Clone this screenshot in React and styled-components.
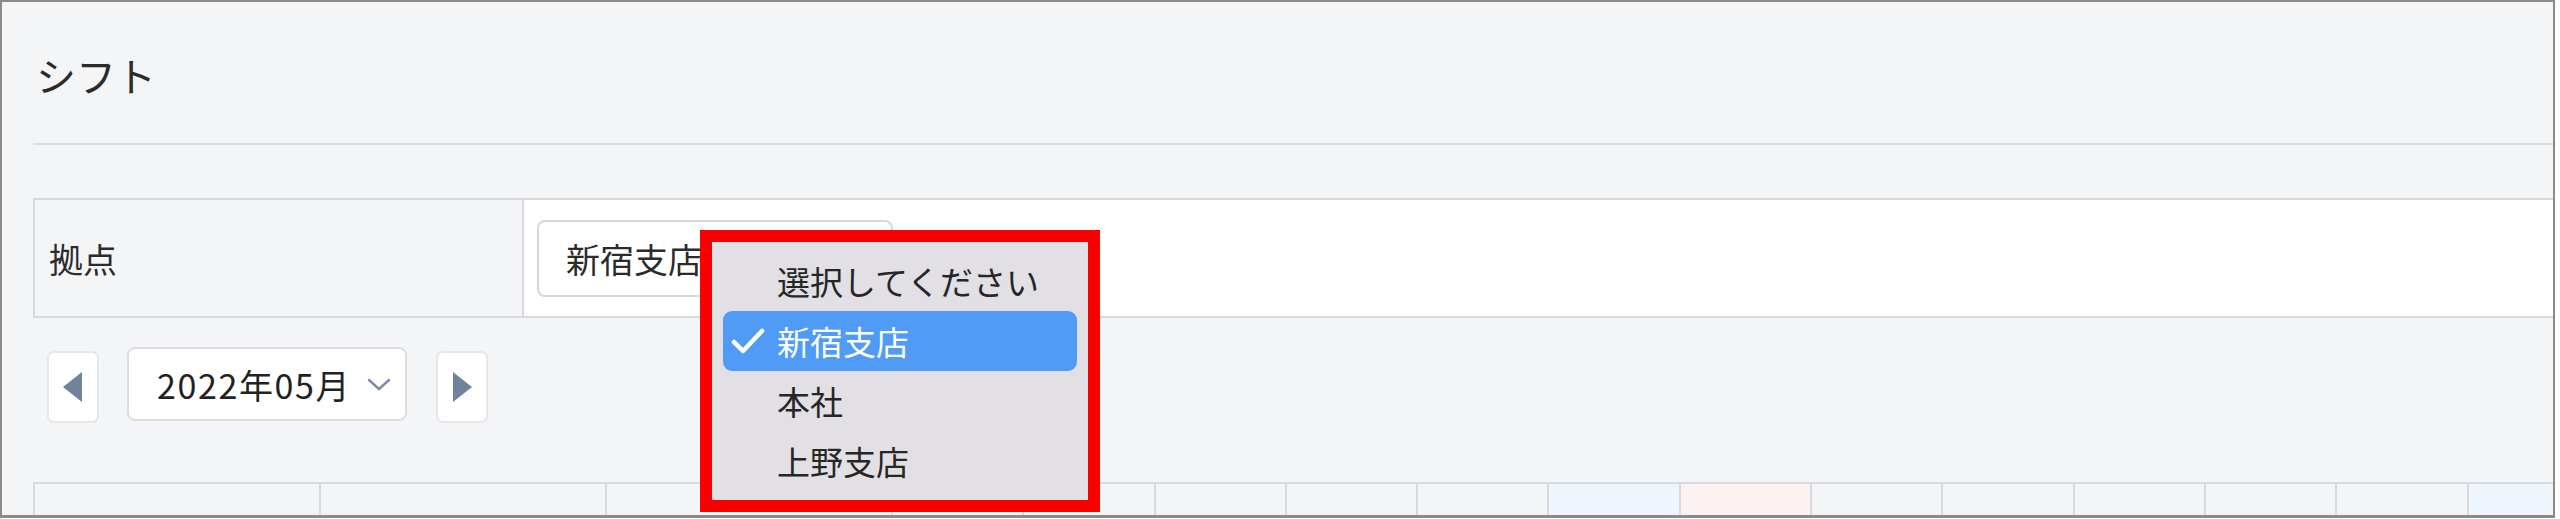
import React from 'react';
import styled, { createGlobalStyle } from 'styled-components';

const font = '"Noto Sans CJK JP", "Noto Sans", sans-serif';

const branches = ['選択してください', '新宿支店', '本社', '上野支店'];
const selectedBranch = '新宿支店';
const days = Array.from({ length: 31 }, (_, i) => i);

const dayTone = (i) => {
  if (i % 7 === 5) return 'sat';
  if (i % 7 === 6) return 'sun';
  return 'normal';
};

const App = () => (
  <>
    <GlobalStyle />
    <StyledFrame>
      <StyledHeader>
        <StyledTitle>シフト</StyledTitle>
      </StyledHeader>
      <StyledDivider />

      <StyledFormTable>
        <StyledLabelCell>拠点</StyledLabelCell>
        <StyledValueCell>
          <StyledSelectWrap>
            <StyledSelect>{selectedBranch}</StyledSelect>
            <StyledMenu>
              {branches.map((name) => (
                <StyledMenuItem key={name} $active={name === selectedBranch}>
                  <StyledCheckSlot>
                    {name === selectedBranch && (
                      <svg width="34" height="28" viewBox="0 0 34 28">
                        <path d="M3 15 L12 24 L31 4" fill="none" stroke="#fff" strokeWidth="4.5" strokeLinecap="round" strokeLinejoin="round" />
                      </svg>
                    )}
                  </StyledCheckSlot>
                  {name}
                </StyledMenuItem>
              ))}
            </StyledMenu>
          </StyledSelectWrap>
        </StyledValueCell>
      </StyledFormTable>

      <StyledNavRow>
        <StyledArrowButton aria-label="prev">
          <svg width="20" height="30" viewBox="0 0 20 30">
            <path d="M19 0 L19 30 L0 15 Z" fill="#6f839c" />
          </svg>
        </StyledArrowButton>
        <StyledMonthSelect>
          <StyledMonthText>2022年05月</StyledMonthText>
          <svg width="24" height="13" viewBox="0 0 24 13">
            <path d="M2 2 L12 11 L22 2" fill="none" stroke="#7d8fa6" strokeWidth="2.5" strokeLinecap="round" />
          </svg>
        </StyledMonthSelect>
        <StyledArrowButton aria-label="next">
          <svg width="20" height="30" viewBox="0 0 20 30">
            <path d="M1 0 L1 30 L20 15 Z" fill="#6f839c" />
          </svg>
        </StyledArrowButton>
      </StyledNavRow>

      <StyledShiftTable>
        <StyledHeadCell />
        <StyledHeadCell />
        <StyledHeadCell />
        {days.map((i) => (
          <StyledDayCell key={i} $tone={dayTone(i)} />
        ))}
      </StyledShiftTable>
    </StyledFrame>
  </>
);

const GlobalStyle = createGlobalStyle`
  body {
    margin: 0;
    background: #ffffff;
    font-family: ${font};
    color: #2b2b2b;
  }
`;

const StyledFrame = styled.div`
  box-sizing: border-box;
  width: 2555px;
  height: 518px;
  border: 2px solid #8a8a8a;
  border-bottom-width: 3px;
  background: #f4f5f7;
  padding-left: 31px;
  overflow: hidden;
`;

const StyledHeader = styled.div`
  height: 141px;
  display: flex;
  align-items: center;
  padding-left: 3px;
  padding-top: 4px;
  box-sizing: border-box;
`;

const StyledTitle = styled.h1`
  margin: 0;
  font-size: 40px;
  font-weight: 400;
  color: #2b2b2b;
`;

const StyledDivider = styled.div`
  height: 2px;
  background: #dadce2;
`;

const StyledFormTable = styled.div`
  margin-top: 53px;
  display: grid;
  grid-template-columns: 489px 1fr;
  height: 120px;
  box-sizing: border-box;
  border: 2px solid #d7d9df;
  border-right: none;
`;

const StyledLabelCell = styled.div`
  display: flex;
  align-items: center;
  padding-left: 14px;
  background: #f4f5f7;
  border-right: 2px solid #d7d9df;
  font-size: 34px;
  color: #2b2b2b;
`;

const StyledValueCell = styled.div`
  display: flex;
  align-items: center;
  padding-left: 13px;
  background: #ffffff;
`;

const StyledSelectWrap = styled.div`
  position: relative;
`;

const StyledSelect = styled.div`
  box-sizing: border-box;
  width: 356px;
  height: 77px;
  display: flex;
  align-items: center;
  padding-left: 27px;
  border: 2px solid #d6d6d8;
  border-radius: 8px;
  background: #fff;
  font-size: 34px;
  color: #2b2b2b;
`;

const StyledMenu = styled.div`
  position: absolute;
  left: 163px;
  top: 10px;
  box-sizing: border-box;
  width: 400px;
  height: 282px;
  border: 12px solid #f70000;
  background: #e2e0e5;
  padding: 9px 11px;
  display: flex;
  flex-direction: column;
`;

const StyledMenuItem = styled.div`
  height: 60px;
  display: flex;
  align-items: center;
  padding-left: 8px;
  border-radius: 9px;
  font-size: 33px;
  background: ${({ $active }) => ($active ? '#4f9bf6' : 'transparent')};
  color: ${({ $active }) => ($active ? '#ffffff' : '#262626')};
`;

const StyledCheckSlot = styled.span`
  width: 46px;
  display: flex;
  align-items: center;
`;

const StyledNavRow = styled.div`
  margin-top: 29px;
  display: flex;
  align-items: center;
  height: 74px;
`;

const StyledArrowButton = styled.div`
  box-sizing: border-box;
  width: 52px;
  height: 72px;
  margin-top: 6px;
  display: flex;
  align-items: center;
  justify-content: center;
  background: #fff;
  border: 2px solid #e6e7ea;
  border-radius: 7px;
  margin-left: 14px;
`;

const StyledMonthSelect = styled.div`
  box-sizing: border-box;
  width: 280px;
  height: 74px;
  margin-left: 28px;
  display: flex;
  align-items: center;
  justify-content: space-between;
  padding: 0 14px 0 28px;
  background: #fff;
  border: 2px solid #dcdde1;
  border-radius: 8px;
  color: #222;

  & + div {
    margin-left: 29px;
  }
`;

const StyledMonthText = styled.span`
  font-size: 34px;
  letter-spacing: 1.6px;
`;

const StyledShiftTable = styled.div`
  margin-top: 61px;
  display: flex;
  height: 90px;
  border-top: 2px solid #d8dae0;
  border-left: 2px solid #d8dae0;
`;

const StyledHeadCell = styled.div`
  flex: 0 0 286px;
  box-sizing: border-box;
  border-right: 2px solid #d8dae0;
  background: #f4f5f7;
`;

const StyledDayCell = styled.div`
  flex: 0 0 131.3px;
  box-sizing: border-box;
  border-right: 2px solid #d8dae0;
  background: ${({ $tone }) => {
    if ($tone === 'sat') return '#eef5fc';
    if ($tone === 'sun') return '#fdf2f2';
    return '#f4f5f7';
  }};
`;

export default App;
